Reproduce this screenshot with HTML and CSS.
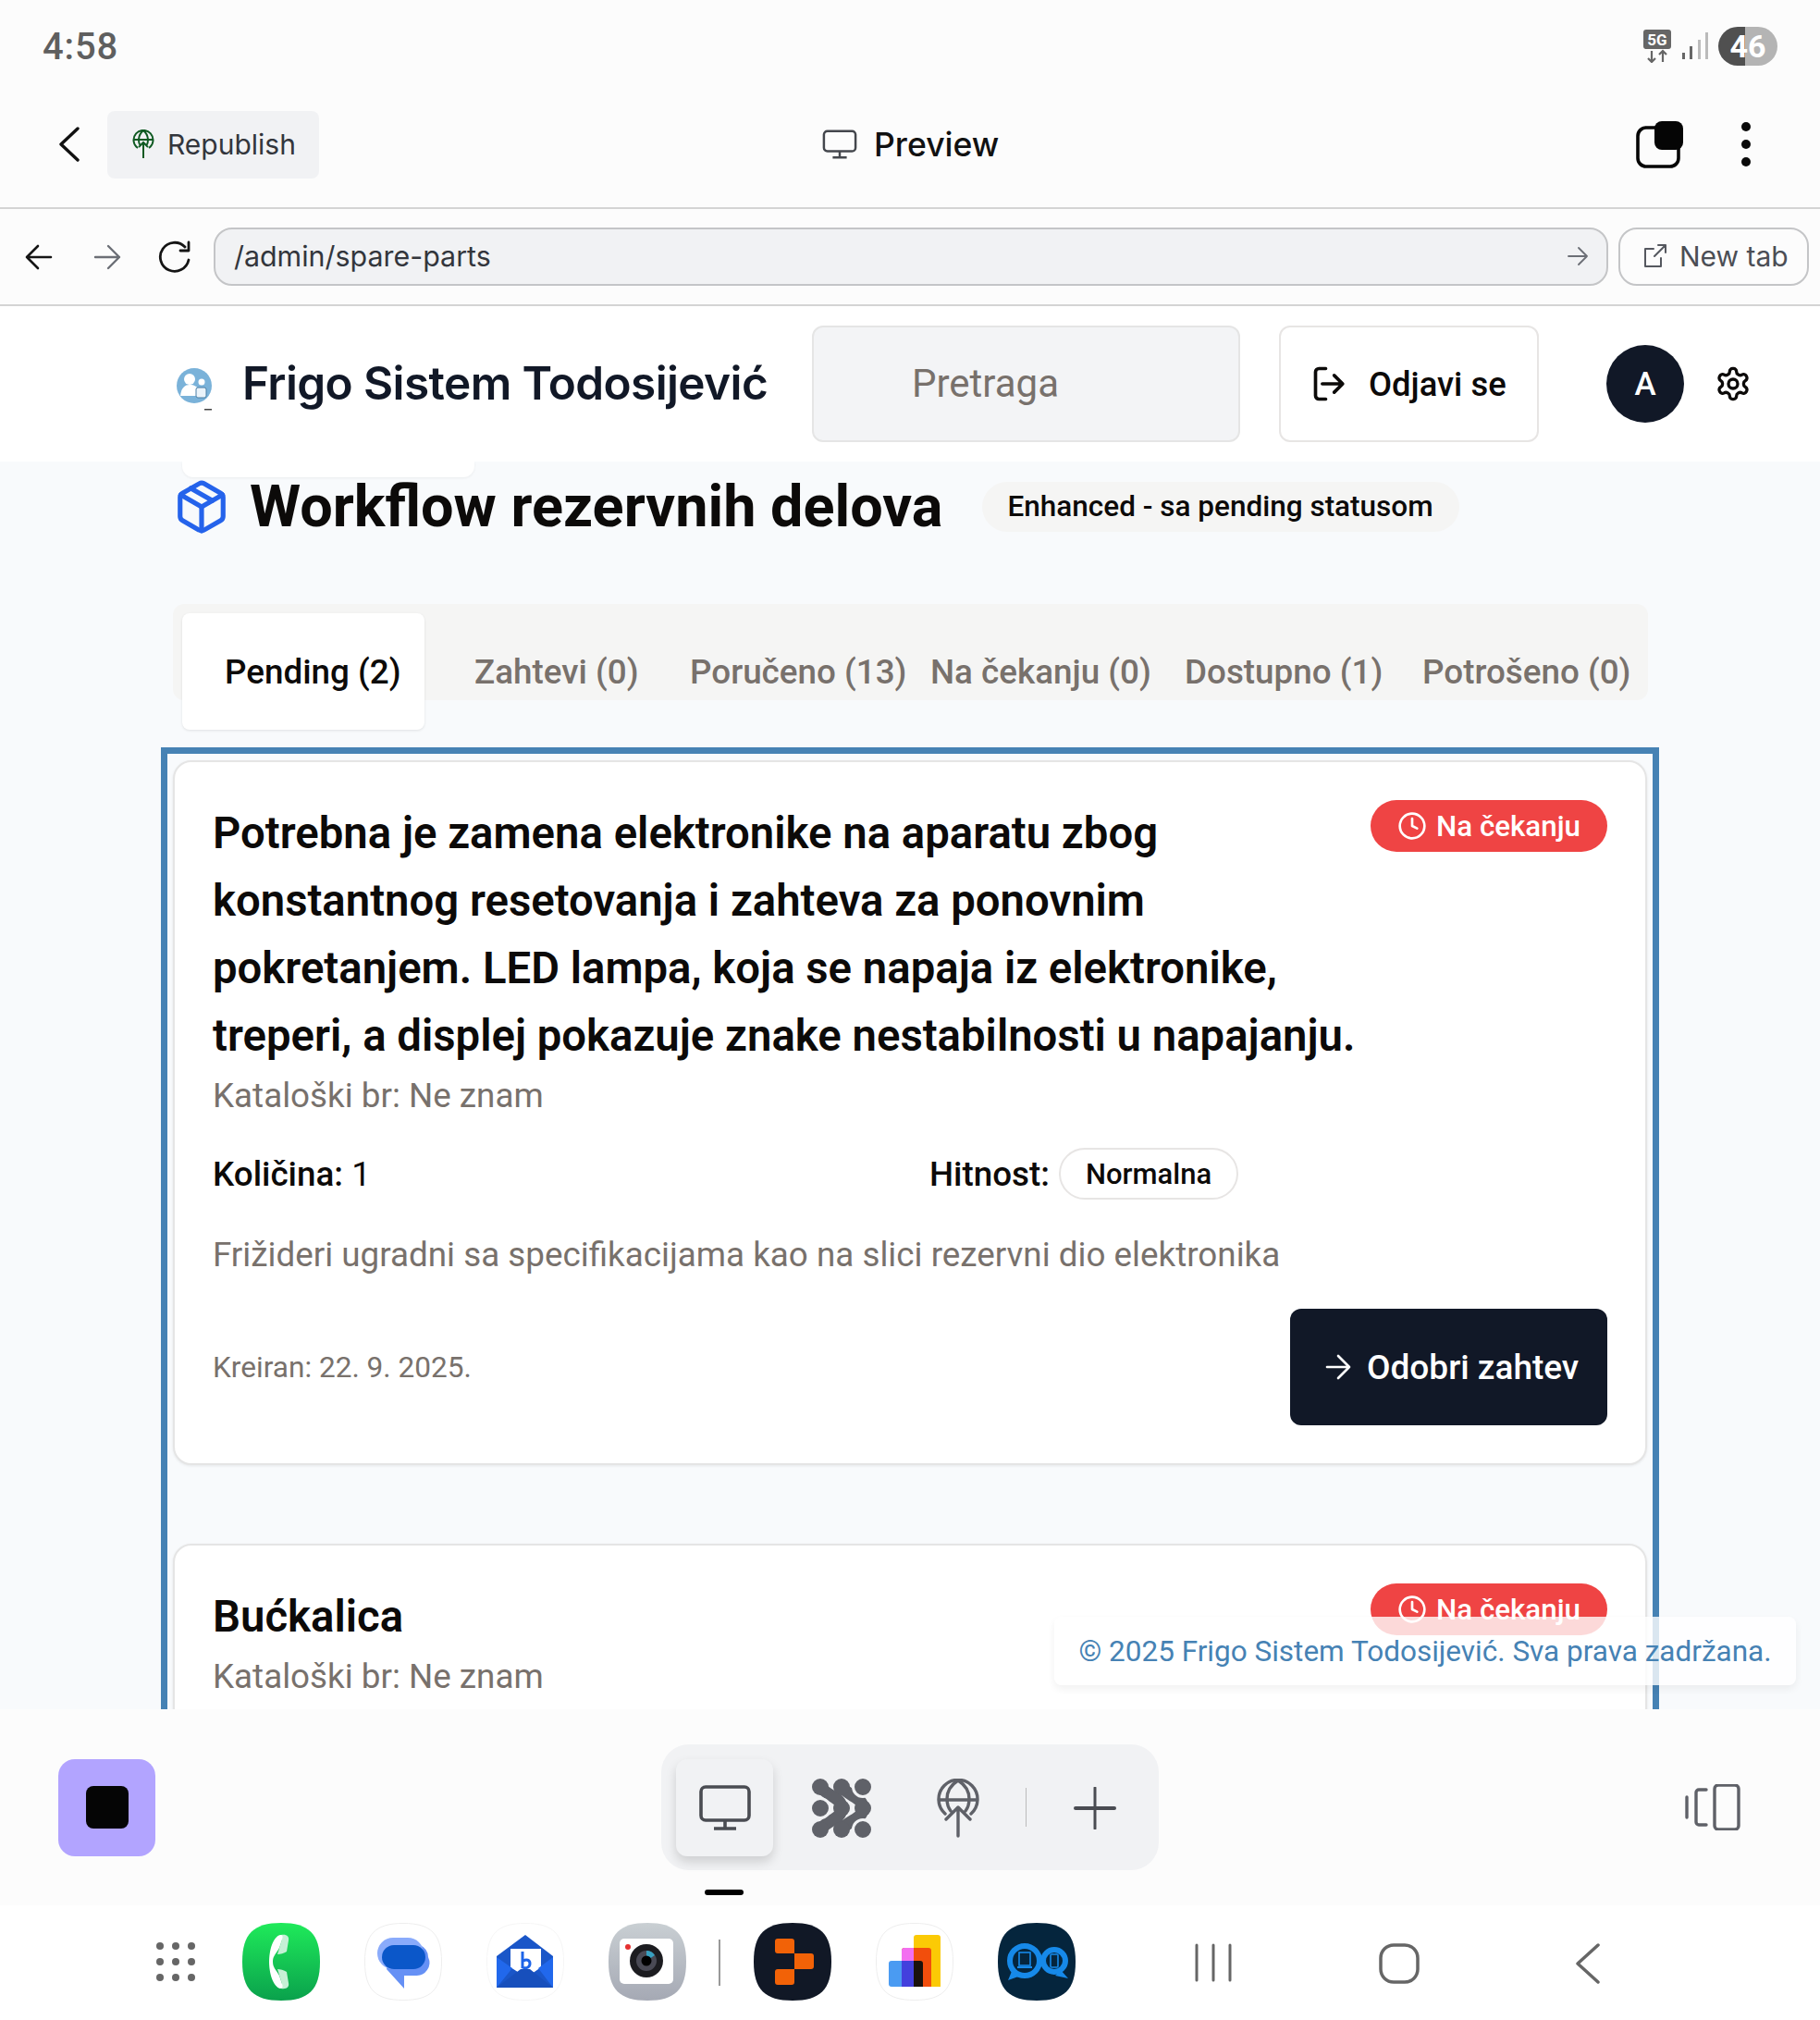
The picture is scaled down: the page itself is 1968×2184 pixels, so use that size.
FILE: index.html
```html
<!DOCTYPE html>
<html lang="sr">
<head>
<meta charset="utf-8">
<title>Frigo Sistem Todosijević</title>
<link rel="stylesheet" href="styles.css">
</head>
<body>
<div class="app">
  <div class="status">
    <span class="time">4:58</span>
    <div class="status-right">
      <svg class="net" viewBox="0 0 32 36"><rect x="1" y="0" width="30" height="21" rx="3" fill="#666"/><text x="16" y="16.500" class="net-t">5G</text><path d="M10 23v12M6 31l4 4 4-4M22 35V23M18 27l4-4 4 4" fill="none" stroke="#666" stroke-width="2.200"/></svg>
      <svg class="sig" viewBox="0 0 30 30"><rect x="1" y="22" width="3" height="7" fill="#666"/><rect x="9" y="15" width="3" height="14" fill="#666"/><rect x="18" y="8" width="3" height="21" fill="#bbb"/><rect x="26" y="0" width="3" height="29" fill="#bbb"/></svg>
      <div class="batt"><span>46</span></div>
    </div>
  </div>

  <div class="topbar">
    <div class="top-left">
      <svg class="back" viewBox="0 0 24 38"><path d="M21 2 3 19l18 17" fill="none" stroke="#111" stroke-width="3.400" stroke-linecap="round" stroke-linejoin="round"/></svg>
      <div class="republish">
        <svg class="ico-rep" viewBox="0 0 24 32" fill="none" stroke="#0f5a22" stroke-width="2"><path d="M6 20a10.500 10.500 0 1 1 12 0M2 11h20M12 1c-6 5-6 13-3 17M12 1c6 5 6 13 3 17M12 31V14M7 19l5-5 5 5"/></svg>
        <span>Republish</span>
      </div>
    </div>
    <div class="preview">
      <svg class="ico-mon" viewBox="0 0 40 34" fill="none" stroke="#44474d" stroke-width="2.600"><rect x="2" y="2" width="36" height="23" rx="4"/><path d="M20 25v6M12 32h16"/></svg>
      <span>Preview</span>
    </div>
    <div class="top-right">
      <svg class="ico-tabs" viewBox="0 0 52 52"><rect x="2" y="8" width="44" height="42" rx="9" fill="none" stroke="#050505" stroke-width="3.600"/><rect x="20" y="1" width="31" height="31" rx="8" fill="#050505"/></svg>
      <div class="dots"><i></i><i></i><i></i></div>
    </div>
  </div>

  <div class="urlbar">
    <svg class="nav" viewBox="0 0 30 30" fill="none" stroke="#151515" stroke-width="2.600" stroke-linecap="round" stroke-linejoin="round"><path d="M28 15H2M14 3 2 15l12 12"/></svg>
    <svg class="nav" viewBox="0 0 30 30" fill="none" stroke="#6c6f76" stroke-width="2.400" stroke-linecap="round" stroke-linejoin="round"><path d="M2 15h26M16 3l12 12-12 12"/></svg>
    <svg class="nav nav-r" viewBox="0 0 38 36" fill="none" stroke="#151515" stroke-width="2.800" stroke-linecap="round" stroke-linejoin="round"><path d="M31 7a15.500 15.500 0 1 0 4 14M35 2v9H26"/></svg>
    <div class="url">
      <span>/admin/spare-parts</span>
      <svg class="url-go" viewBox="0 0 22 22" fill="none" stroke="#6c6f76" stroke-width="1.800" stroke-linecap="round" stroke-linejoin="round"><path d="M1 11h20M12 2l9 9-9 9"/></svg>
    </div>
    <div class="newtab">
      <svg class="ico-ext" viewBox="0 0 26 26" fill="none" stroke="#55585f" stroke-width="2" stroke-linecap="round" stroke-linejoin="round"><path d="M12 5H3v19h17v-9M13 13 25 1M17 1h8v8"/></svg>
      <span>New tab</span>
    </div>
  </div>

  <header class="site">
    <div class="brand">
      <svg class="logo" viewBox="0 0 40 46"><circle cx="19" cy="19" r="19" fill="#7ab2d9"/><circle cx="14" cy="12" r="6" fill="#fff"/><path d="M4 30c1-9 5-12 10-12s8 2 10 5v7z" fill="#fff"/><rect x="21" y="21" width="11" height="11" rx="2" fill="#eaf3fa" stroke="#4a7fa6"/><circle cx="27" cy="15" r="3.500" fill="#fff"/><rect x="30" y="44" width="8" height="1.500" fill="#444"/></svg>
      <span>Frigo Sistem Todosijević</span>
    </div>
    <div class="search">Pretraga</div>
    <div class="logout">
      <svg class="ico-log" viewBox="0 0 24 24" fill="none" stroke="#0c0a09" stroke-width="2" stroke-linecap="round" stroke-linejoin="round"><path d="M9 21H5a2 2 0 0 1-2-2V5a2 2 0 0 1 2-2h4"/><path d="m14 7 5 5-5 5M19 12H7"/></svg>
      <span>Odjavi se</span>
    </div>
    <div class="avatar">A</div>
    <svg class="gear" viewBox="0 0 24 24" fill="none" stroke="#0c0a09" stroke-width="2" stroke-linecap="round" stroke-linejoin="round"><path d="M12.220 2h-.44a2 2 0 0 0-2 2v.18a2 2 0 0 1-1 1.730l-.43.250a2 2 0 0 1-2 0l-.15-.08a2 2 0 0 0-2.730.730l-.22.380a2 2 0 0 0 .73 2.730l.15.100a2 2 0 0 1 1 1.720v.510a2 2 0 0 1-1 1.740l-.15.090a2 2 0 0 0-.73 2.730l.22.380a2 2 0 0 0 2.730.730l.15-.08a2 2 0 0 1 2 0l.43.250a2 2 0 0 1 1 1.730V20a2 2 0 0 0 2 2h.44a2 2 0 0 0 2-2v-.18a2 2 0 0 1 1-1.730l.43-.25a2 2 0 0 1 2 0l.15.080a2 2 0 0 0 2.730-.730l.22-.39a2 2 0 0 0-.73-2.730l-.15-.08a2 2 0 0 1-1-1.740v-.5a2 2 0 0 1 1-1.740l.15-.09a2 2 0 0 0 .73-2.730l-.22-.38a2 2 0 0 0-2.730-.730l-.15.080a2 2 0 0 1-2 0l-.43-.25a2 2 0 0 1-1-1.730V4a2 2 0 0 0-2-2z"/><circle cx="12" cy="12" r="3"/></svg>
  </header>

  <main class="main">
    <div class="ghost"></div>
    <div class="title-row">
      <svg class="ico-box" viewBox="0 0 24 24" fill="none" stroke="#2563eb" stroke-width="2" stroke-linecap="round" stroke-linejoin="round"><path d="M11 21.730a2 2 0 0 0 2 0l7-4A2 2 0 0 0 21 16V8a2 2 0 0 0-1-1.730l-7-4a2 2 0 0 0-2 0l-7 4A2 2 0 0 0 3 8v8a2 2 0 0 0 1 1.730z"/><path d="M12 22V12"/><path d="M3.290 7 12 12l8.710-5"/><path d="m7.500 4.270 9 5.150"/></svg>
      <h1>Workflow rezervnih delova</h1>
      <span class="tag">Enhanced - sa pending statusom</span>
    </div>

    <nav class="tabs">
      <div class="tab active">Pending (2)</div>
      <div class="tab t-zah">Zahtevi (0)</div>
      <div class="tab t-por">Poručeno (13)</div>
      <div class="tab t-nac">Na čekanju (0)</div>
      <div class="tab t-dos">Dostupno (1)</div>
      <div class="tab t-pot">Potrošeno (0)</div>
    </nav>

    <section class="frame">
      <article class="card">
        <div class="card-head">
          <div class="card-title">Potrebna je zamena elektronike na aparatu zbog konstantnog resetovanja i zahteva za ponovnim pokretanjem. LED lampa, koja se napaja iz elektronike, treperi, a displej pokazuje znake nestabilnosti u napajanju.</div>
          <span class="status-pill">
            <svg class="ico-clock" viewBox="0 0 24 24" fill="none" stroke="#fff" stroke-width="2" stroke-linecap="round" stroke-linejoin="round"><circle cx="12" cy="12" r="10"/><path d="M12 6v6l4 2"/></svg>
            Na čekanju
          </span>
        </div>
        <div class="cat">Kataloški br: Ne znam</div>
        <div class="meta">
          <div class="qty"><b>Količina:</b> 1</div>
          <div class="urg"><b>Hitnost:</b><span class="pill">Normalna</span></div>
        </div>
        <p class="desc">Frižideri ugradni sa specifikacijama kao na slici rezervni dio elektronika</p>
        <div class="card-foot">
          <span class="created">Kreiran: 22. 9. 2025.</span>
          <div class="approve">
            <svg class="ico-arrow" viewBox="0 0 24 24" fill="none" stroke="#fff" stroke-width="2" stroke-linecap="round" stroke-linejoin="round"><path d="M3 12h18M12 3l9 9-9 9"/></svg>
            <span>Odobri zahtev</span>
          </div>
        </div>
      </article>
      <article class="card">
        <div class="card-head">
          <div class="card-title">Bućkalica</div>
          <span class="status-pill">
            <svg class="ico-clock" viewBox="0 0 24 24" fill="none" stroke="#fff" stroke-width="2" stroke-linecap="round" stroke-linejoin="round"><circle cx="12" cy="12" r="10"/><path d="M12 6v6l4 2"/></svg>
            Na čekanju
          </span>
        </div>
        <div class="cat">Kataloški br: Ne znam</div>
      </article>
    </section>
    <div class="toast">© 2025 Frigo Sistem Todosijević. Sva prava zadržana.</div>
  </main>

  <div class="toolbar">
    <div class="stop"><i></i></div>
    <div class="pal">
      <div class="pal-active">
        <svg class="pal-mon" viewBox="0 0 56 50" fill="none" stroke="#4a4c52" stroke-width="3.600"><rect x="2" y="2" width="52" height="36" rx="5"/><path d="M28 38v8M16 47h24"/></svg>
      </div>
      <svg class="pal-dots" viewBox="0 0 64 64" fill="none" stroke-linecap="round">
        <path d="M9 9C18 20 32 20 32 32S18 44 9 55M32 9C41 20 55 20 55 32S41 44 32 55" stroke="#5f6168" stroke-width="13"/>
        <g fill="#5f6168">
          <circle cx="9" cy="9" r="9"/><circle cx="32" cy="9" r="9"/>
          <circle cx="32" cy="32" r="9"/><circle cx="55" cy="32" r="9"/>
          <circle cx="9" cy="55" r="9"/><circle cx="32" cy="55" r="9"/>
        </g>
        <g fill="#5f6168" stroke="#f1f2f4" stroke-width="3">
          <circle cx="9" cy="32" r="10.500"/>
          <circle cx="55" cy="9" r="10.500"/>
          <circle cx="55" cy="55" r="10.500"/>
        </g>
      </svg>
      <svg class="pal-globe" viewBox="0 0 48 64" fill="none" stroke="#5f6168" stroke-width="3.400" stroke-linecap="round" stroke-linejoin="round"><path d="M10 38a21 21 0 1 1 28 0M3 23h42M24 2C16 7 12 14 12 22c0 5 1 9 4 13M24 2c8 5 12 12 12 20 0 5-1 9-4 13M24 62V31M11 44l13-13 13 13"/></svg>
      <i class="pal-sep"></i>
      <svg class="pal-plus" viewBox="0 0 46 46" stroke="#4a4c52" stroke-linecap="round"><path d="M2 23h42" stroke-width="4"/><path d="M23 1v44" stroke-width="3"/></svg>
    </div>
    <svg class="ico-split" viewBox="0 0 60 50" fill="none" stroke="#5f6168" stroke-width="3.400" stroke-linecap="round" stroke-linejoin="round"><path d="M2 14v22M23 6h-8a3 3 0 0 0-3 3v32a3 3 0 0 0 3 3h8"/><rect x="32" y="1" width="26" height="48" rx="4"/></svg>
    <i class="handle"></i>
  </div>

  <div class="dock">
    <div class="grid9"><i></i><i></i><i></i><i></i><i></i><i></i><i></i><i></i><i></i></div>
    <svg class="app-i" viewBox="0 0 84 84"><defs><linearGradient id="g1" x1="0" y1="0" x2="0" y2="1"><stop offset="0" stop-color="#1fea5a"/><stop offset="1" stop-color="#0aa14c"/></linearGradient></defs><path d="M42 0C72 0 84 12 84 42S72 84 42 84 0 72 0 42 12 0 42 0z" fill="url(#g1)"/><path d="M42 13c6-1 9 2 8 6l-2 12c-3 2-7 3-10 3l5-16zM42 71c6 1 9-2 8-6l-2-12c-3-2-7-3-10-3l5 16z" fill="#c6f0d6"/><path d="M41 13C33 15 29 30 29 42S33 69 41 71C44 71 44 68 43 66L40 57C36 50 33 48 33 42S36 34 40 27L43 18C44 15 44 13 41 13z" fill="#fff"/></svg>
    <svg class="app-i" viewBox="0 0 84 84"><path d="M42 .5C72 .5 83.500 12 83.500 42S72 83.500 42 83.500.5 72 .5 42 12 .5 42 .5z" fill="#fff" stroke="#eee"/><path d="M24 50 43 71V57H55A14 14 0 0 0 69 37 14 14 0 0 0 60 24H30z" fill="#6590f5"/><rect x="14" y="16" width="50" height="34" rx="17" fill="#8aabfb"/><rect x="19" y="24" width="47" height="26" rx="13" fill="#0b57c9"/></svg>
    <svg class="app-i" viewBox="0 0 84 84"><path d="M42 .5C72 .5 83.500 12 83.500 42S72 83.500 42 83.500.5 72 .5 42 12 .5 42 .5z" fill="#fff" stroke="#f6f6f6"/><path d="M42 13 11 36v34h61V36z" fill="#1a56c8"/><path d="M26 28h33v20l-10 7-6-4-6 4-11-7z" fill="#fff"/><path d="M39 31v17c4 2 8 0 8-4 0-4-4-5-7-3" fill="none" stroke="#1d64e8" stroke-width="3"/><path d="M11 37 28 49 11 70zM72 37 56 49 72 70z" fill="#2168ec"/><path d="M11 70 37 50h10l25 20z" fill="#174fbc"/></svg>
    <svg class="app-i" viewBox="0 0 84 84"><defs><linearGradient id="g2" x1="0" y1="0" x2="0" y2="1"><stop offset="0" stop-color="#c9cfd3"/><stop offset="1" stop-color="#a5a9b4"/></linearGradient></defs><path d="M42 0C72 0 84 12 84 42S72 84 42 84 0 72 0 42 12 0 42 0z" fill="url(#g2)"/><rect x="12" y="17" width="58" height="49" rx="5" fill="#fff"/><circle cx="41" cy="41" r="18" fill="#1c1c20"/><circle cx="41" cy="41" r="11" fill="#4a4a55"/><path d="M41 30a11 11 0 0 1 9 5l-9 6z" fill="#38a0c0"/><circle cx="41" cy="41" r="5.500" fill="#000"/><circle cx="21" cy="26" r="3" fill="#e53030"/></svg>
    <i class="dock-sep"></i>
    <svg class="app-i" viewBox="0 0 84 84"><path d="M42 0C72 0 84 12 84 42S72 84 42 84 0 72 0 42 12 0 42 0z" fill="#111826"/><path d="M23 20a3 3 0 0 1 3-3h15a3 3 0 0 1 3 3v13H26a3 3 0 0 1-3-3zM44 33h18a3 3 0 0 1 3 3v11a3 3 0 0 1-3 3H44zM26 50h18v14a3 3 0 0 1-3 3H26a3 3 0 0 1-3-3V53a3 3 0 0 1 3-3z" fill="#f26207"/></svg>
    <svg class="app-i" viewBox="0 0 84 84"><path d="M42 .5C72 .5 83.500 12 83.500 42S72 83.500 42 83.500.5 72 .5 42 12 .5 42 .5z" fill="#fff" stroke="#eee"/><path d="M41 16a3 3 0 0 1 3-3h23a3 3 0 0 1 3 3v53H41z" fill="#fbca05"/><path d="M28 30a3 3 0 0 1 3-3h26a3 3 0 0 1 3 3v39H28z" fill="#f24e0c"/><path d="M28 30a3 3 0 0 1 3-3h10v14H28z" fill="#f36ff0"/><path d="M14 44a3 3 0 0 1 3-3h11v28H17a3 3 0 0 1-3-3z" fill="#4a9bf2"/><rect x="28" y="41" width="13" height="28" fill="#4340dd"/><path d="M41 41h7a3 3 0 0 1 3 3v25H41z" fill="#1a120d"/></svg>
    <svg class="app-i" viewBox="0 0 84 84"><path d="M42 0C72 0 84 12 84 42S72 84 42 84 0 72 0 42 12 0 42 0z" fill="#05253d"/><g fill="none" stroke="#1689e9" stroke-width="6"><circle cx="29" cy="41" r="16"/><circle cx="61" cy="41" r="12"/></g><path d="M16 50 11 62l14-5zM68 51l8 9-14-3z" fill="#1689e9"/><rect x="23" y="32" width="12" height="14" fill="none" stroke="#1689e9" stroke-width="1.600"/><path d="M21 48h16" stroke="#1689e9" stroke-width="2"/><rect x="57" y="34" width="8" height="14" rx="1" fill="none" stroke="#1689e9" stroke-width="1.600"/></svg>
    <svg class="sys-rec" viewBox="0 0 42 42" stroke="#666" stroke-width="3" stroke-linecap="round"><path d="M3 2v38M21 2v38M39 2v38"/></svg>
    <svg class="sys-home" viewBox="0 0 44 44" fill="none" stroke="#666" stroke-width="3.500"><rect x="2" y="2" width="40" height="40" rx="14"/></svg>
    <svg class="sys-back" viewBox="0 0 28 44" fill="none" stroke="#666" stroke-width="3.500" stroke-linecap="round" stroke-linejoin="round"><path d="M25 2 3 22l22 20"/></svg>
  </div>
</div>
</body>
</html>
```
FILE: styles.css
```css
* { box-sizing: border-box; }
html, body { margin: 0; padding: 0; }
body { font-family: Roboto, "Noto Sans", sans-serif; color: #0c0a09; background: #fff; }
.app { width: 1968px; height: 2184px; display: flex; flex-direction: column; overflow: hidden; }

.status { height: 90px; background: #fcfcfc; display: flex; align-items: center; justify-content: space-between; padding: 10px 46px 0; }
.time { font: 500 40px Roboto, sans-serif; color: #5f5f5f; letter-spacing: .8px; }
.status-right { display: flex; align-items: center; gap: 10px; }
.net { width: 32px; height: 36px; margin-left: -1px; }
.net-t { font: 700 17px Roboto, sans-serif; fill: #fff; text-anchor: middle; }
.sig { width: 30px; height: 30px; }
.batt { width: 64px; height: 42px; border-radius: 21px; background: linear-gradient(90deg, #505050 0 46%, #b4b4b4 46%); display: flex; align-items: center; justify-content: center; }
.batt span { font: 700 34px Roboto, sans-serif; color: #fff; }

.topbar { height: 136px; background: #fcfcfc; border-bottom: 2px solid #d4d4d4; display: flex; align-items: center; justify-content: space-between; padding: 0 75px 2px 63px; position: relative; }
.top-left { display: flex; align-items: center; gap: 29px; }
.back { width: 24px; height: 38px; }
.republish { width: 229px; height: 73px; background: #f1f2f4; border-radius: 8px; display: flex; align-items: center; gap: 14px; padding-left: 27px; font: 400 30px Inter, sans-serif; color: #33363c; }
.ico-rep { width: 24px; height: 32px; }
.preview { position: absolute; left: 889px; top: 0; height: 132px; display: flex; align-items: center; gap: 18px; font: 500 35.600px Inter, sans-serif; color: #111; }
.ico-mon { width: 38px; height: 34px; }
.top-right { display: flex; align-items: center; gap: 62px; }
.ico-tabs { width: 52px; height: 52px; }
.dots { display: flex; flex-direction: column; gap: 9px; }
.dots i { display: block; width: 10px; height: 10px; border-radius: 50%; background: #0a0a0a; }

.urlbar { height: 105px; flex: none; background: #fcfcfc; border-bottom: 2px solid #d4d4d4; display: flex; align-items: center; padding: 0 12px 0 27px; }
.nav { width: 30px; height: 30px; margin-right: 44px; flex: none; }
.nav-r { width: 38px; height: 36px; margin-right: 24px; margin-left: -6px; }
.url { flex: 1; height: 63px; border: 2px solid #c4c5c7; border-radius: 20px; background: #f1f2f4; display: flex; align-items: center; justify-content: space-between; padding: 0 20px 1px; font: 400 30.400px Inter, sans-serif; color: #33363c; }
.url-go { width: 22px; height: 22px; }
.newtab { width: 206px; height: 63px; margin-left: 11px; border: 2px solid #c4c5c7; border-radius: 20px; display: flex; align-items: center; gap: 14px; padding: 0 0 1px 24px; font: 400 30px Inter, sans-serif; color: #4b4e55; }
.ico-ext { width: 26px; height: 26px; }

.site { height: 168px; flex: none; background: #fff; display: flex; align-items: center; padding-left: 191px; }
.brand { display: flex; align-items: center; gap: 31px; width: 687px; padding-bottom: 2px; font: 600 49.500px Inter, sans-serif; color: #111827; letter-spacing: -.6px; white-space: nowrap; }
.logo { width: 40px; height: 46px; margin-top: 14px; flex: none; }
.search { width: 463px; height: 126px; background: #f3f4f6; border: 2px solid #e5e5e5; border-radius: 12px; display: flex; align-items: center; padding: 0 0 1px 106px; font: 400 42px Roboto, sans-serif; color: #78716c; }
.logout { width: 281px; height: 126px; margin-left: 42px; background: #fff; border: 2px solid #e7e5e4; border-radius: 12px; display: flex; align-items: center; gap: 19px; padding-left: 32px; font: 500 36.400px Roboto, sans-serif; }
.ico-log { width: 44px; height: 44px; }
.avatar { width: 84px; height: 84px; margin-left: 73px; border-radius: 50%; background: #111827; color: #fff; display: flex; align-items: center; justify-content: center; font: 500 35px Roboto, sans-serif; }
.gear { width: 40px; height: 40px; margin-left: 33px; }

.main { flex: 1; min-height: 0; position: relative; overflow: hidden; background: #f8fafc; padding: 0 174px; }
.ghost { position: absolute; left: 197px; top: 0; width: 316px; height: 17px; background: #fff; border-radius: 0 0 12px 12px; box-shadow: 0 1px 3px rgba(0,0,0,.06); }
.title-row { height: 97px; padding: 0 0 0 14px; display: flex; align-items: center; }
.ico-box { width: 62px; height: 62px; flex: none; margin-left: -1px; }
h1 { margin: 0 0 0 21px; font: 700 63px Roboto, sans-serif; color: #0c0a09; white-space: nowrap; }
.tag { margin-left: 42px; height: 54px; border-radius: 27px; background: #f5f5f4; display: flex; align-items: center; padding: 0 28px; font: 500 31.500px Roboto, sans-serif; white-space: nowrap; }

.tabs { position: relative; margin: 57px 0 0 13px; width: 1595px; height: 104px; background: #f5f5f4; border-radius: 12px; }
.tab { position: absolute; top: 10px; height: 126px; display: flex; align-items: center; font: 500 36.800px Roboto, sans-serif; color: #78716c; white-space: nowrap; }
.tab.active { left: 10px; width: 262px; background: #fff; border-radius: 8px; color: #0c0a09; padding-left: 46px; box-shadow: 0 1px 3px rgba(0,0,0,.1); }
.t-zah { left: 326px; }
.t-por { left: 559px; }
.t-nac { left: 819px; }
.t-dos { left: 1094px; }
.t-pot { left: 1351px; }

.frame { margin-top: 51px; height: 1100px; border: 7px solid #4682b4; padding: 7px 6px; display: flex; flex-direction: column; gap: 85px; }
.card { background: #fff; border: 2px solid #e5e5e5; border-radius: 20px; box-shadow: 0 1px 3px rgba(0,0,0,.08); padding: 41px; }
.card-head { display: flex; justify-content: space-between; align-items: flex-start; gap: 8px; }
.card-title { font: 600 47.300px/73px Roboto, sans-serif; color: #0c0a09; }
.status-pill { flex: none; height: 56px; width: 256px; border-radius: 28px; background: #ef4444; color: #fff; display: flex; align-items: center; justify-content: center; gap: 10px; font: 500 31.300px Roboto, sans-serif; }
.ico-clock { width: 32px; height: 32px; }
.cat { font: 400 36.800px/48px Roboto, sans-serif; color: #78716c; margin-top: 4px; }
.meta { display: grid; grid-template-columns: 775px 1fr; align-items: center; margin-top: 32px; font: 400 36.800px Roboto, sans-serif; }
.meta b { font-weight: 500; }
.urg { display: flex; align-items: center; gap: 10px; }
.pill { height: 56px; padding: 0 27px; display: flex; align-items: center; border: 2px solid #e7e5e4; border-radius: 28px; background: #fff; font: 500 31px Roboto, sans-serif; }
.desc { margin: 36px 0 0; font: 400 36.800px/48px Roboto, sans-serif; color: #78716c; }
.card-foot { display: flex; justify-content: space-between; align-items: center; margin-top: 34px; }
.created { font: 400 31.600px Roboto, sans-serif; color: #78716c; }
.approve { width: 343px; height: 126px; border-radius: 12px; background: #111827; color: #fff; display: flex; align-items: center; gap: 15px; padding-left: 36px; font: 500 37px Roboto, sans-serif; }
.ico-arrow { width: 32px; height: 32px; }

.toast { position: absolute; left: 1140px; top: 1249px; width: 802px; height: 74px; background: rgba(255,255,255,.8); border-radius: 8px; box-shadow: 0 4px 8px rgba(0,0,0,.06); display: flex; align-items: center; justify-content: center; font: 400 31.500px Roboto, sans-serif; color: #4682b4; white-space: nowrap; }

.toolbar { height: 212px; flex: none; background: #fcfcfc; position: relative; display: flex; align-items: center; justify-content: space-between; padding: 0 86px 44px 63px; }
.stop { width: 105px; height: 105px; border-radius: 18px; background: #b2a4ff; display: flex; align-items: center; justify-content: center; margin-top: 44px; }
.stop i { display: block; width: 46px; height: 46px; border-radius: 8px; background: #050505; }
.pal { position: absolute; left: 715px; top: 38px; width: 538px; height: 136px; background: #f1f2f4; border-radius: 30px; }
.pal-active { position: absolute; left: 16px; top: 16px; width: 105px; height: 105px; border-radius: 12px; background: #f1f2f4; box-shadow: 0 6px 12px rgba(0,0,0,.15); display: flex; align-items: center; justify-content: center; }
.pal-mon { width: 56px; height: 50px; }
.pal-dots { position: absolute; left: 163px; top: 37px; width: 64px; height: 64px; }
.pal-globe { position: absolute; left: 297px; top: 37px; width: 48px; height: 64px; }
.pal-sep { position: absolute; left: 394px; top: 47px; width: 1px; height: 42px; background: #bbb; }
.pal-plus { position: absolute; left: 446px; top: 46px; width: 46px; height: 46px; }
.ico-split { width: 60px; height: 50px; margin-top: 44px; }
.handle { position: absolute; left: 762px; top: 195px; width: 42px; height: 6px; border-radius: 3px; background: #000; }

.dock { height: 124px; flex: none; background: #fff; position: relative; }
.grid9 { position: absolute; left: 169px; top: 40px; display: grid; grid-template-columns: repeat(3, 8px); gap: 9px; }
.grid9 i { width: 8px; height: 8px; border-radius: 50%; background: #666; }
.app-i { position: absolute; top: 19px; width: 84px; height: 84px; }
.app-i:nth-of-type(1) { left: 262px; }
.app-i:nth-of-type(2) { left: 394px; }
.app-i:nth-of-type(3) { left: 526px; }
.app-i:nth-of-type(4) { left: 658px; }
.app-i:nth-of-type(5) { left: 815px; }
.app-i:nth-of-type(6) { left: 947px; }
.app-i:nth-of-type(7) { left: 1079px; }
.dock-sep { position: absolute; left: 777px; top: 37px; width: 2px; height: 50px; background: #999; }
.sys-rec { position: absolute; left: 1291px; top: 41px; width: 42px; height: 42px; }
.sys-home { position: absolute; left: 1491px; top: 41px; width: 44px; height: 44px; }
.sys-back { position: absolute; left: 1703px; top: 41px; width: 28px; height: 44px; }
```
